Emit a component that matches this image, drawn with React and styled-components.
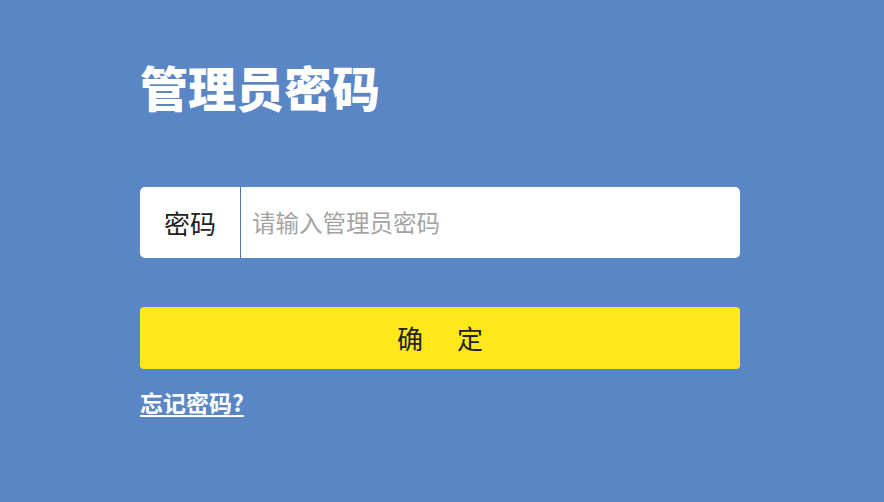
import React from 'react'
import styled, { createGlobalStyle } from 'styled-components'

const GlobalStyle = createGlobalStyle`
  html, body {
    margin: 0;
    padding: 0;
    background: #5b86c5;
  }
  body {
    font-family: "Noto Sans CJK SC", "Noto Sans", sans-serif;
  }
`

const Page = styled.div`
  width: 884px;
  height: 502px;
  background: #5b86c5;
  box-sizing: border-box;
  padding: 58px 0 0 140px;
  display: flex;
  flex-direction: column;
`

const Title = styled.h1`
  margin: 0;
  font-size: 48px;
  line-height: 1.2;
  font-weight: 900;
  color: #ffffff;
`

const Field = styled.div`
  margin-top: 71px;
  width: 600px;
  height: 71px;
  display: flex;
  align-items: stretch;
  background: #ffffff;
  border-radius: 5px;
  overflow: hidden;
`

const Label = styled.div`
  width: 100px;
  flex-shrink: 0;
  display: flex;
  align-items: center;
  justify-content: center;
  font-size: 26px;
  color: #222222;
  border-right: 1px solid #4f74b8;
`

const Input = styled.input`
  flex: 1;
  border: none;
  outline: none;
  background: transparent;
  padding: 0 0 0 11px;
  font-family: "Noto Sans CJK SC", "Noto Sans", sans-serif;
  font-size: 23.5px;
  color: #333;
  &::placeholder {
    color: #a3a3a3;
  }
`

const Submit = styled.button`
  margin-top: 49px;
  width: 600px;
  height: 62px;
  border: none;
  border-radius: 4px;
  background: #fde81b;
  display: flex;
  align-items: center;
  justify-content: center;
  gap: 34px;
  font-family: "Noto Sans CJK SC", "Noto Sans", sans-serif;
  font-size: 26px;
  color: #222222;
  cursor: pointer;
`

const Forgot = styled.a`
  margin-top: 20px;
  align-self: flex-start;
  font-size: 23px;
  line-height: 1.2;
  font-weight: 700;
  color: #ffffff;
  text-decoration: underline;
  text-underline-offset: 3px;
  cursor: pointer;
`

export default function App() {
  return (
    <>
      <GlobalStyle />
      <Page>
        <Title>管理员密码</Title>
        <Field>
          <Label>密码</Label>
          <Input type="password" placeholder="请输入管理员密码" />
        </Field>
        <Submit>
          <span>确</span>
          <span>定</span>
        </Submit>
        <Forgot>忘记密码?</Forgot>
      </Page>
    </>
  )
}
